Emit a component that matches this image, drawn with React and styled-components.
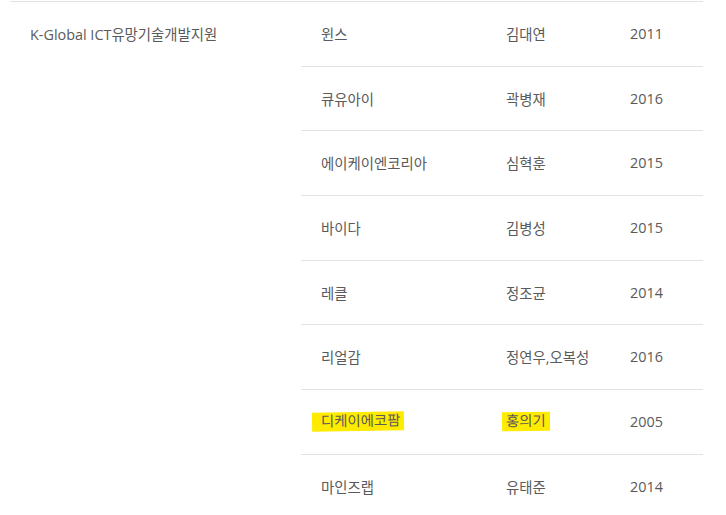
import React from 'react';
import styled, { createGlobalStyle } from 'styled-components';

const GlobalStyle = createGlobalStyle`
  body {
    margin: 0;
    background: #fff;
    font-family: "Open Sans", "Noto Sans CJK KR", sans-serif;
  }
`;

const Wrap = styled.div`
  padding: 1px 23px 0 10px;
`;

const Table = styled.div`
  display: grid;
  grid-template-columns: 291px 185px 124px 93px;
  grid-auto-rows: 64.7px;
  border-top: 1px solid #e2e2e2;
  color: #5a5a5a;
  font-size: 14.4px;
`;

const Program = styled.div`
  grid-row: 1 / span 8;
  grid-column: 1;
  height: 63px;
  display: flex;
  align-items: center;
  padding-left: 20px;
`;

const Cell = styled.div`
  display: flex;
  align-items: center;
  padding-left: 20px;
  padding-bottom: 1px;
  border-bottom: 1px solid #e2e2e2;
`;

const Mark = styled.span`
  background: #ffeb00;
  padding: 1px 4px 2px ${(props) => (props.lead ? '9px' : '4px')};
  margin-left: ${(props) => (props.lead ? '-9px' : '-4px')};
  transform: rotate(-0.8deg);
  display: inline-block;
  line-height: 16px;
`;

const rows = [
  { name: '윈스', ceo: '김대연', year: '2011' },
  { name: '큐유아이', ceo: '곽병재', year: '2016' },
  { name: '에이케이엔코리아', ceo: '심혁훈', year: '2015' },
  { name: '바이다', ceo: '김병성', year: '2015' },
  { name: '레클', ceo: '정조균', year: '2014' },
  { name: '리얼감', ceo: '정연우,오복성', year: '2016' },
  { name: '디케이에코팜', ceo: '홍의기', year: '2005', mark: true },
  { name: '마인즈랩', ceo: '유태준', year: '2014' },
];

function App() {
  return (
    <>
      <GlobalStyle />
      <Wrap>
        <Table>
          <Program>K-Global ICT유망기술개발지원</Program>
          {rows.map((r) => (
            <React.Fragment key={r.name}>
              <Cell>{r.mark ? <Mark lead>{r.name}</Mark> : r.name}</Cell>
              <Cell>{r.mark ? <Mark>{r.ceo}</Mark> : r.ceo}</Cell>
              <Cell>{r.year}</Cell>
            </React.Fragment>
          ))}
        </Table>
      </Wrap>
    </>
  );
}

export default App;
